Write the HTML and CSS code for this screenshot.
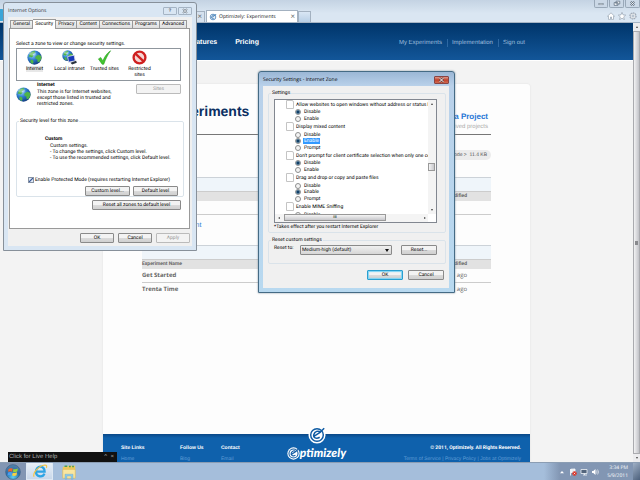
FILE: index.html
```html
<!DOCTYPE html>
<html lang="en">
<head>
<meta charset="utf-8">
<title>Optimizely: Experiments</title>
<link rel="stylesheet" href="styles.css">
</head>
<body>
<svg class="defs" aria-hidden="true">
  <defs>
    <radialGradient id="sea" cx=".35" cy=".3" r=".8"><stop offset="0" stop-color="#a8dcff"/><stop offset=".45" stop-color="#2f7fd0"/><stop offset="1" stop-color="#0d3070"/></radialGradient>
    <radialGradient id="orb" cx=".5" cy=".85" r=".9"><stop offset="0" stop-color="#5fd0f0"/><stop offset=".5" stop-color="#2a6ea8"/><stop offset="1" stop-color="#5f86a8"/></radialGradient>
    <symbol id="globe" viewBox="0 0 16 16">
      <circle cx="8" cy="8" r="7.600" fill="url(#sea)"/>
      <path d="M3 4c2-3 5-3 6-2.500l-1 2-2 1 1 1.500-2 2-2-1-1.500 1zM9 7l3-2 3 1 .4 3-2 3.500-2 .5-.5-3-2-1zM4 10l2.500 1 .5 2-1 2-2.500-2z" fill="#4fb548"/>
      <ellipse cx="6" cy="4" rx="3.500" ry="2" fill="#fff" opacity=".35"/>
    </symbol>
    <symbol id="mark" viewBox="0 0 20 20">
      <circle cx="10" cy="10" r="9.500" fill="#fff"/>
      <circle cx="10" cy="10" r="7" fill="none" stroke="#0f5ba3" stroke-width="1.600"/>
      <path d="M6.500 11.500L13.500 7C11.500 4.500 7.500 6 6.500 9.500S9 15 13 12.500M13.500 7L18 2.500" fill="none" stroke="#0f5ba3" stroke-width="1.700"/>
    </symbol>
  </defs>
</svg>

<div class="browser">
  <header class="chrome">
    <span class="back"></span>
    <div class="tabs">
      <div class="tab tab-old"><span>×</span></div>
      <div class="tab tab-on"><svg class="fav"><use href="#mark"/></svg><span class="tab-name">Optimizely: Experiments</span><span class="x">×</span></div>
      <div class="tab tab-new"></div>
    </div>
    <div class="chrome-right">
      <div class="winbtns">
        <button aria-label="Minimize"><svg viewBox="0 0 14 7"><rect x="4.500" y="3.500" width="5" height="1.500" fill="#fff" stroke="#5b6b7c" stroke-width=".6"/></svg></button>
        <button aria-label="Restore"><svg viewBox="0 0 14 7"><path d="M6.500 1h4v3h-4zM4.500 2.500h4v3h-4z" fill="#fff" stroke="#5b6b7c" stroke-width=".8"/></svg></button>
        <button aria-label="Close"><svg viewBox="0 0 14 7"><path d="M5 1.500l4 4M9 1.500l-4 4" stroke="#5b6b7c" stroke-width="1.800"/><path d="M5 1.500l4 4M9 1.500l-4 4" stroke="#fff" stroke-width=".8"/></svg></button>
      </div>
      <div class="tools">
        <svg viewBox="0 0 8 8"><path d="M.5 4.200L4 .8l3.500 3.400h-1V7.400h-2V5h-1v2.400h-2V4.200z" fill="#fff" stroke="#8a97a6" stroke-width=".6"/></svg>
        <svg viewBox="0 0 8 8"><path d="M4 .4l1.100 2.500 2.600.2-2 1.800.7 2.700L4 6.200 1.600 7.600l.7-2.700-2-1.800 2.600-.2z" fill="#fff" stroke="#8a97a6" stroke-width=".6"/></svg>
        <svg viewBox="0 0 8 8"><circle cx="4" cy="4" r="2.900" fill="#fff" stroke="#8a97a6" stroke-width="1.300" stroke-dasharray="1.500 .7"/><circle cx="4" cy="4" r="2.700" fill="#fff" stroke="#8a97a6" stroke-width=".5"/><circle cx="4" cy="4" r="1.200" fill="#dce7f2" stroke="#8a97a6" stroke-width=".6"/></svg>
      </div>
    </div>
  </header>

  <div class="view">
    <div class="page">
      <div class="banner">
        <nav class="nav-main"><a href="#">Features</a><a href="#">Pricing</a></nav>
        <nav class="nav-user"><a href="#">My Experiments</a><a href="#">Implementation</a><a href="#">Sign out</a></nav>
      </div>
      <main class="card">
        <div class="content">
          <div class="heading">
            <h1>My Experiments</h1>
            <div class="create"><a href="#">Create a Project</a><span>archived projects</span></div>
          </div>
          <div class="size"><span>Code &gt;&nbsp; 11.4 KB</span></div>
          <table class="list">
            <thead><tr class="bar"><td colspan="2"></td></tr><tr><th></th><th class="when">Modified</th></tr></thead>
            <tbody><tr><td></td><td class="when"></td></tr></tbody>
          </table>
          <a class="new" href="#">New Experiment</a>
          <table class="list">
            <thead><tr class="bar"><td colspan="2"></td></tr><tr><th>Experiment Name</th><th class="when">Modified</th></tr></thead>
            <tbody>
              <tr><td>Get Started</td><td class="when">ago</td></tr>
              <tr class="last"><td>Trenta Time</td><td class="when">ago</td></tr>
            </tbody>
          </table>
        </div>
        <footer class="foot">
          <div class="links">
            <div><b>Site Links</b><a href="#">Home</a></div>
            <div><b>Follow Us</b><a href="#">Blog</a></div>
            <div><b>Contact</b><a href="#">Email</a></div>
          </div>
          <div class="brand"><svg class="badge"><use href="#mark"/></svg><div class="word"><svg><use href="#mark"/></svg><span>ptimizely</span></div></div>
          <div class="legal"><b>© 2011, Optimizely. All Rights Reserved.</b><span>Terms of Service | Privacy Policy | Jobs at Optimizely</span></div>
        </footer>
      </main>
    </div>
    <div class="scroll"><span class="arrow up"></span><div class="thumb"><i></i></div><span class="arrow down"></span></div>
    <div class="help"><span>Click for Live Help</span><span class="help-x">^&nbsp; ×</span></div>
  </div>
</div>

<section class="dialog options">
  <div class="title"><span>Internet Options</span><div class="cap"><button>?</button><button aria-label="Close"><svg viewBox="0 0 8 6"><path d="M2 1l4 4M6 1L2 5" stroke="#66717c" stroke-width="1.600"/><path d="M2 1l4 4M6 1L2 5" stroke="#fff" stroke-width=".6"/></svg></button></div></div>
  <div class="inner">
    <div class="tabrow"><button>General</button><button class="on">Security</button><button>Privacy</button><button>Content</button><button>Connections</button><button>Programs</button><button>Advanced</button></div>
    <div class="panel">
      <p class="lead">Select a zone to view or change security settings.</p>
      <div class="zones">
        <div><svg viewBox="0 0 16 16"><use href="#globe"/></svg><span class="picked">Internet</span></div>
        <div><svg viewBox="0 0 16 16"><use href="#globe" width="12" height="12"/><path d="M6 7l7-1.500 1 6-7 1.500z" fill="#1838b8" stroke="#d8dce4" stroke-width=".9"/><path d="M9 13.500l6-2 .8 2-5 2z" fill="#28323e"/></svg><span>Local intranet</span></div>
        <div><svg viewBox="0 0 16 16"><path d="M1.500 9.500L4 8l2.300 3.600C8 7 10.500 3.500 14.500.8 11.500 5 9 10 7.200 15.200H5.500z" fill="#42c52f" stroke="#239a1c" stroke-width=".6"/></svg><span>Trusted sites</span></div>
        <div><svg viewBox="0 0 16 16"><circle cx="8" cy="8" r="6.300" fill="#f6d5d3" stroke="#cf2020" stroke-width="2.500"/><path d="M3.600 3.800l8.800 8.400" stroke="#cf2020" stroke-width="2.500"/></svg><span>Restricted<br>sites</span></div>
      </div>
      <div class="about">
        <svg viewBox="0 0 16 16"><use href="#globe"/></svg>
        <div><b>Internet</b><p>This zone is for Internet websites,<br>except those listed in trusted and<br>restricted zones.</p></div>
        <button class="btn" disabled>Sites</button>
      </div>
      <fieldset class="level">
        <legend>Security level for this zone</legend>
        <div class="custom"><b>Custom</b><p>Custom settings.<br>- To change the settings, click Custom level.<br>- To use the recommended settings, click Default level.</p></div>
        <label class="protect"><input type="checkbox" checked>Enable Protected Mode (requires restarting Internet Explorer)</label>
        <div class="row"><button class="btn">Custom level...</button><button class="btn">Default level</button></div>
      </fieldset>
      <button class="btn reset-all">Reset all zones to default level</button>
    </div>
    <div class="actions"><button class="btn">OK</button><button class="btn">Cancel</button><button class="btn" disabled>Apply</button></div>
  </div>
</section>

<section class="dialog security">
  <div class="title"><span>Security Settings - Internet Zone</span><button class="close" aria-label="Close"><svg viewBox="0 0 8 6"><path d="M2 1l4 4M6 1L2 5" stroke="#5c3030" stroke-width="1.800"/><path d="M2 1l4 4M6 1L2 5" stroke="#fff" stroke-width="1"/></svg></button></div>
  <div class="inner">
    <fieldset class="settings">
      <legend>Settings</legend>
      <div class="listbox">
        <div class="rows">
          <div class="head">Allow websites to open windows without address or status b</div>
          <label><input type="radio" name="a" checked><span>Disable</span></label>
          <label><input type="radio" name="a"><span>Enable</span></label>
          <div class="head">Display mixed content</div>
          <label><input type="radio" name="b"><span>Disable</span></label>
          <label class="hot"><input type="radio" name="b" checked><span>Enable</span></label>
          <label><input type="radio" name="b"><span>Prompt</span></label>
          <div class="head">Don't prompt for client certificate selection when only one ce</div>
          <label><input type="radio" name="c" checked><span>Disable</span></label>
          <label><input type="radio" name="c"><span>Enable</span></label>
          <div class="head">Drag and drop or copy and paste files</div>
          <label><input type="radio" name="d"><span>Disable</span></label>
          <label><input type="radio" name="d" checked><span>Enable</span></label>
          <label><input type="radio" name="d"><span>Prompt</span></label>
          <div class="head">Enable MIME Sniffing</div>
          <label><input type="radio" name="e"><span>Disable</span></label>
        </div>
        <div class="vbar"><span class="arrow up"></span><i></i><span class="arrow down"></span></div>
        <div class="hbar"><span class="arrow left"></span><i>ııı</i><span class="arrow right"></span></div>
      </div>
      <p class="note">*Takes effect after you restart Internet Explorer</p>
    </fieldset>
    <fieldset class="reset">
      <legend>Reset custom settings</legend>
      <div class="reset-row"><label for="to">Reset to:</label><div class="pick"><select id="to"><option>Medium-high (default)</option></select></div><button class="btn">Reset...</button></div>
    </fieldset>
    <div class="actions"><button class="btn primary">OK</button><button class="btn">Cancel</button></div>
  </div>
</section>

<div class="taskbar">
  <button class="start" aria-label="Start"><svg viewBox="0 0 18 18"><circle cx="9" cy="9" r="8.300" fill="url(#orb)" stroke="#35567c" stroke-width=".6"/><path d="M4 5.500Q6.500 4 8.700 5.200L8 8.600Q6 7.600 3.500 8.800z" fill="#f2642c"/><path d="M9.500 5.500Q12 6.500 14.500 5L13.800 8.400Q11.500 9.700 8.900 8.800z" fill="#9ad03c"/><path d="M3.300 9.600Q5.800 8.500 7.900 9.500L7.200 12.800Q5 11.800 2.800 13z" fill="#4a9cf0"/><path d="M8.700 9.800Q11.200 10.700 13.600 9.300L12.900 12.700Q10.500 14 8 13z" fill="#fbd040"/></svg></button>
  <button class="task" aria-label="Internet Explorer"><svg viewBox="0 0 18 18"><path d="M4.800 9.800h9.400C14.300 2 4.600 2.500 4.400 9.800 4.600 15.700 12 16.800 14 11.900" fill="none" stroke="#2da4e4" stroke-width="2.600"/><path d="M2.300 15.500C.5 12 7 3 14.500 2.200c2.500 0 2.300 2 1.500 3.300" fill="none" stroke="#f5c444" stroke-width="1.300"/></svg></button>
  <button class="folder" aria-label="Explorer"><svg viewBox="0 0 18 18"><path d="M2 3h5l1-1h8v12H2z" fill="#eec95c"/><path d="M4 2.500h3M9 2.800h2M12.500 2.800h2" stroke="#4c9f50" stroke-width="1.500"/><path d="M2 6h14v10H2z" fill="#f9e6a0" stroke="#dcb650" stroke-width=".6"/><path d="M4.500 17v-5.500h9V17h-2v-3.500h-5V17z" fill="#8fcbea" stroke="#5d9fc8" stroke-width=".4"/></svg></button>
  <div class="tray">
    <svg viewBox="0 0 8 8"><path d="M2 5.300h4L4 3z" fill="#fff"/></svg>
    <svg viewBox="0 0 8 8"><path d="M1.500 1v6.500M2 1.200l4-.2v3.600H2z" fill="#e8edf3" stroke="#fff" stroke-width=".8"/><circle cx="5.500" cy="5.500" r="2.200" fill="#d83428"/><path d="M4.700 4.700l1.600 1.600M6.300 4.700L4.700 6.300" stroke="#fff" stroke-width=".6"/></svg>
    <svg viewBox="0 0 8 8"><path d="M1 1.500h6v4H1zM3 7h4M4.500 5.500V7" fill="#53657c" stroke="#f0f4f8" stroke-width=".8"/></svg>
    <svg viewBox="0 0 8 8"><path d="M1 3h1.300L4.500 1v6L2.300 5H1z" fill="#fff"/><path d="M5.500 2.500q1 1.500 0 3M6.600 1.500q1.800 2.500 0 5" fill="none" stroke="#fff" stroke-width=".6"/></svg>
    <div class="clock">3:34 PM<br>5/9/2011</div>
  </div>
  <div class="peek"></div>
</div>
</body>
</html>
```

FILE: styles.css
```css
* { box-sizing: border-box; }
html, body { height: 100%; }
body {
  margin: 0;
  display: grid;
  grid-template-rows: 1fr 18px;
  position: relative;
  overflow: hidden;
  font-family: "Liberation Sans", sans-serif;
  text-rendering: geometricPrecision;
}
p, h1, fieldset { margin: 0; padding: 0; }
a { color: inherit; text-decoration: none; }
button, select { text-rendering: inherit; }
button { margin: 0; padding: 0; font: inherit; color: inherit; border: 0; background: none; }
svg { display: block; }
.defs { position: absolute; width: 0; height: 0; }

/* browser frame */
.browser { display: grid; grid-template-rows: 23px 1fr; min-height: 0; }
.chrome {
  display: flex;
  justify-content: space-between;
  background: linear-gradient(#c4d3e3, #dae6f2 60%);
  border-bottom: 1px solid #a6b5c5;
}
.back { width: 8px; height: 12px; margin-top: 9px; border-radius: 0 6px 6px 0; background: #3aa5d8; }
.tabs { flex: 1; display: flex; align-items: flex-end; padding-left: 178px; font: 5px/10px "Open Sans", sans-serif; color: #111; }
.tab { height: 11px; border: 1px solid #a3b1c0; border-bottom: 0; background: #d5e1ee; }
.tab-old { width: 19px; text-align: right; padding-right: 2px; font-size: 8px; margin-right: 1px; color: #666; }
.tab-on { width: 92px; height: 12px; display: flex; align-items: center; gap: 2px; padding: 0 2px; background: #fff; }
.tab-name { flex: 1; white-space: nowrap; }
.x { font-size: 8px; color: #666; }
.fav { width: 8px; height: 8px; }
.tab-new { width: 13px; background: linear-gradient(#d9e6f4, #b8cfe6); }
.chrome-right { display: flex; flex-direction: column; align-items: flex-end; gap: 4px; }
.winbtns { display: flex; gap: 1px; }
.winbtns button { width: 14px; height: 8px; border: 1px solid #99a8b8; border-top: 0; border-radius: 0 0 2px 2px; background: #cbd8e6; }
.winbtns button + button { width: 15px; }
.winbtns svg { width: 100%; height: 7px; }
.tools { display: flex; gap: 3px; padding-right: 3px; }
.tools svg { width: 8px; height: 8px; }

/* web page */
.view { position: relative; display: grid; grid-template-columns: 1fr 7px; min-height: 0; overflow: hidden; }
.page { display: flex; flex-direction: column; align-items: center; background: #f3f3f3; min-height: 0; }
.banner {
  width: 100%;
  height: 38px;
  flex: none;
  display: flex;
  justify-content: space-between;
  align-items: center;
  padding: 2px 108px 0 188px;
  background: linear-gradient(#00356a, #125699);
  border-bottom: 1px solid #fff;
}
.nav-main { display: flex; gap: 18px; color: #fff; font-weight: bold; font-size: 7px; }
.nav-user { display: flex; color: #9dbede; font-size: 6px; line-height: 8px; }
.nav-user a + a { margin-left: 5px; padding-left: 4px; border-left: 1px solid #2d68a3; }
.card {
  flex: 1;
  width: 427px;
  max-width: 100%;
  margin-top: 23px;
  display: flex;
  flex-direction: column;
  justify-content: space-between;
  background: #fdfdfd;
  border-radius: 3px 3px 0 0;
  box-shadow: 0 0 2px #ddd;
}
.content { padding: 18px 39px 0; }
.heading { display: flex; justify-content: space-between; height: 33px; border-bottom: 1px solid #777; }
h1 { font-size: 14px; line-height: 18px; color: #0b2f62; }
.create { display: flex; flex-direction: column; text-align: right; padding: 10px 3px 0 0; font-size: 6px; line-height: 10px; color: #aaa; }
.create a { font-size: 8px; line-height: 10px; font-weight: bold; color: #1f76d6; }
.size { display: flex; justify-content: flex-end; margin: 15px 0 17px; }
.size span { font-size: 5px; line-height: 10px; padding: 0 4px; border-radius: 5px; background: #ececec; color: #555; }
.list { width: 100%; border-collapse: collapse; font: bold 6px/13px "Open Sans", sans-serif; color: #666; }
.list td, .list th { padding: 0; text-align: left; }
.list .bar td { height: 14px; background: #eff5fa; border-top: 1px solid #ccd2d8; }
.list th { height: 9px; font: bold 5px/8px "Roboto", sans-serif; background: #e2e2e2; border-top: 1px solid #ccc; }
.list tbody td { height: 14px; border-bottom: 1px solid #ccc; }
.list tbody .last td { border: 0; }
.list .when { width: 90px; padding-right: 24px; text-align: right; }
.list td.when { font-weight: normal; font-size: 6px; }
.new { display: block; height: 30px; padding: 4px 0 0 8px; font-size: 7px; line-height: 13px; color: #2f7fd6; }

.foot {
  display: grid;
  grid-template-columns: 1fr 64px 1fr;
  height: 28px;
  padding: 9px 9px 0;
  background: linear-gradient(#0a4887, #0f61ac 4px);
  color: #fff;
  font-size: 5px;
  line-height: 10px;
}
.links { display: flex; padding-left: 9px; }
.links div { display: flex; flex-direction: column; width: 41px; gap: 1px; }
.links div:first-child { width: 59px; }
.links a, .legal span { color: #5f9dd6; }
.brand { display: flex; flex-direction: column; align-items: center; position: relative; }
.badge { position: absolute; top: -17px; width: 18px; height: 18px; }
.word { display: flex; align-items: center; margin-top: 3px; font: italic 900 12px/14px Lato, sans-serif; }
.word svg { width: 13px; height: 13px; }
.legal { display: flex; flex-direction: column; align-items: flex-end; white-space: nowrap; line-height: 11px; }
.legal b { font-family: Roboto, sans-serif; }

.scroll { display: flex; flex-direction: column; background: #ececee; }
.thumb { flex: 1; display: flex; align-items: center; justify-content: center; border: 1px solid #aaabaf; background: linear-gradient(90deg, #f2f2f3, #c2c3c8); }
.thumb i { width: 3px; height: 4px; background: #88898d; }
.arrow { flex: none; display: grid; place-items: center; width: 7px; height: 8px; }
.arrow::before { content: ""; border: 1px solid transparent; }
.up::before { border-bottom: 2px solid #444; border-top: 0; }
.down::before { border-top: 2px solid #444; border-bottom: 0; }
.left::before { border-right: 2px solid #444; border-left: 0; }
.right::before { border-left: 2px solid #444; border-right: 0; }
.help {
  position: absolute;
  left: 8px;
  bottom: 0;
  width: 109px;
  display: flex;
  justify-content: space-between;
  padding: 0 3px 0 1px;
  background: #111;
  color: #b0b0b0;
  font-size: 6px;
  line-height: 10px;
}

/* dialogs */
.dialog { position: absolute; display: flex; flex-direction: column; font: 5px/6px Roboto, sans-serif; color: #000; border-radius: 3px 3px 0 0; }
.dialog .title { display: flex; justify-content: space-between; align-items: center; }
.dialog .title > span { font: 5px/10px "Open Sans", sans-serif; }
.dialog .inner { flex: 1; background: #f0f0f0; }
.options { left: 3px; top: 2px; width: 194px; border: 1px solid #87909a; background: #d9e6f3; padding: 0 4px 4px; }
.options .title { height: 14px; padding-top: 2px; }
.options .title > span { color: #333; }
.cap { display: flex; gap: 1px; color: #667; }
.cap button { width: 14px; height: 8px; border: 1px solid #a5b4c4; border-radius: 1px; font-weight: bold; }
.cap svg, .close svg { width: 100%; height: 6px; }
.options .inner { padding: 2px 2px 3px 1px; }
.tabrow { display: flex; align-items: flex-end; height: 9px; padding: 0 3px 0 1px; }
.tabrow button { flex: auto; height: 8px; line-height: 7px; border: 1px solid #999; border-bottom: 0; border-left-width: 0; background: linear-gradient(#f4f4f4, #ddd); }
.tabrow button:first-child { border-left-width: 1px; }
.tabrow .on { height: 10px; margin-bottom: -1px; background: #fff; z-index: 1; }
.panel { height: 201px; border: 1px solid #999; background: #fff; padding: 12px 4px 0 6px; }
.lead { height: 7px; }
.zones { display: flex; width: 165px; height: 33px; margin-bottom: 1px; padding: 1px 0 0; border: 1px solid #8f969d; }
.zones div { width: 35px; display: flex; flex-direction: column; align-items: center; gap: 1px; text-align: center; white-space: nowrap; }
.zones svg { width: 15px; height: 15px; }
.zones .picked { background: #e8e8e8; }
.about { display: flex; width: 165px; gap: 6px; height: 36px; }
.about svg { width: 15px; height: 15px; margin-top: 5px; }
.about > div { flex: 1; white-space: nowrap; }
.about b { display: block; line-height: 7px; }
.btn { height: 10px; border: 1px solid #8a8a8a; border-radius: 1px; background: linear-gradient(#f3f3f3 45%, #dadada 55%, #d0d0d0); text-align: center; line-height: 8px; white-space: nowrap; }
.btn:disabled { color: #999; border-color: #bbb; background: #f3f3f3; }
.about .btn { width: 45px; margin-top: 2px; }
fieldset { min-width: 0; border: 1px solid #dae3ea; border-radius: 2px; }
legend { padding: 0 1px; margin-left: 2px; line-height: 6px; }
.level { width: 168px; height: 79px; }
.custom { height: 53px; padding: 12px 0 0 28px; white-space: nowrap; }
.custom b { display: block; line-height: 7px; }
.custom p { padding-left: 5px; }
.protect { display: flex; align-items: center; gap: 1px; padding-left: 11px; height: 6px; white-space: nowrap; }
.protect input { appearance: none; margin: 0; width: 6px; height: 6px; border: 1px solid #8793a3; background: linear-gradient(135deg, #dfe8f5 30%, #3c5a9a 50%, #dfe8f5 70%); }
.level .row { display: flex; justify-content: flex-end; gap: 3px; padding: 3px 5px 0 0; }
.level .btn { width: 45px; }
.reset-all { display: block; width: 89px; margin: 3px 0 0 76px; }
.actions { display: flex; justify-content: flex-end; gap: 4px; }
.options .actions { padding-top: 4px; }
.options .actions .btn { width: 34px; height: 10px; }

.security { left: 258px; top: 71px; width: 197px; border: 1px solid #456b85; background: linear-gradient(#9bb7d6, #b9d1ea 14px, #b8d9f0); padding: 0 5px 4px 4px; box-shadow: 0 0 2px #789; }
.security .title { height: 14px; padding-top: 1px; }
.close { width: 15px; height: 8px; border: 1px solid #844; border-radius: 1px; background: linear-gradient(#e09a8c, #c0412c 50%, #d06a50); }
.security .inner { padding: 4px 3px 8px 5px; }
.security fieldset { padding: 0 8px 0 5px; }
.security legend { margin-left: -3px; }
.settings { height: 143px; }
.listbox { display: grid; grid-template-columns: 1fr 8px; grid-template-rows: 114px 8px; height: 124px; margin-top: 3px; border: 1px solid #828790; background: #fff; }
.rows { display: grid; grid-auto-rows: 1fr; height: 118px; overflow: hidden; white-space: nowrap; padding-left: 11px; clip-path: inset(0 0 4px 0); }
.rows > * { display: flex; align-items: center; min-width: 0; }
.rows .head::before { content: ""; width: 6px; height: 7px; margin-right: 2px; flex: none; border: 1px solid #c4c4c4; border-radius: 0 2px 0 0; background: #fff; }
.rows label { gap: 2px; padding-left: 9px; }
.rows input { appearance: none; flex: none; margin: 0; width: 6px; height: 6px; border: 1px solid #8e8f8f; border-radius: 50%; background: #f4f4f4; }
.rows input:checked { background: radial-gradient(#123f66 30%, #9cc6e0 90%); }
.rows label span { padding: 0 1px; }
.hot span { background: #3399ff; color: #fff; }
.vbar { display: flex; flex-direction: column; background: #f4f4f4; min-height: 0; }
.vbar i { width: 7px; height: 8px; margin-top: 55px; border: 1px solid #999; background: linear-gradient(90deg, #f4f4f4, #c8c8cc); }
.vbar .down { margin-top: auto; }
.hbar { grid-column: 1; display: flex; background: #f4f4f4; }
.hbar i { width: 102px; height: 7px; margin: 0 auto 0 2px; border: 1px solid #999; background: linear-gradient(#f4f4f4, #c8c8cc); font-style: normal; text-align: center; line-height: 5px; }
.note { line-height: 8px; }
.reset { height: 27px; margin-top: 4px; }
.reset-row { display: flex; padding-top: 2px; }
.reset-row label { width: 26px; }
.pick { position: relative; flex: 1; }
.pick::after { content: ""; position: absolute; right: 3px; top: 4px; border: 2px solid transparent; border-top: 3px solid #111; border-bottom: 0; }
.pick select { appearance: none; width: 100%; height: 10px; margin: 0; padding: 0 1px; border: 1px solid #8a8a8a; border-radius: 1px; background: linear-gradient(#f0f0f0, #d6d6d6); font: inherit; color: #111; }
.reset-row .btn { width: 36px; margin-left: 9px; }
.security .actions { padding: 6px 2px 0 0; gap: 5px; }
.security .actions .btn { width: 36px; }
.btn.primary { border-color: #2a9fd0; box-shadow: inset 0 0 1px 1px #7fd4f4; }

/* taskbar */
.taskbar { display: flex; background: #a5bedb; border-top: 1px solid #8b9db3; }
.taskbar button svg { width: 16px; height: 16px; margin: 0 auto; }
.start { width: 26px; background: #8296b3; }
.task { width: 27px; background: linear-gradient(#e8f0f8, #c9d8ea); border: 1px solid #dde8f3; border-top: 0; }
.folder { width: 31px; }
.tray { margin-left: auto; display: flex; align-items: center; gap: 3px; padding: 0 5px 0 14px; background: linear-gradient(90deg, #a5bedb, #8296b3 16px); color: #fff; }
.tray svg { width: 8px; height: 8px; }
.clock { width: 26px; text-align: right; font: 5px/8px "Open Sans", sans-serif; }
.peek { width: 7px; background: linear-gradient(135deg, #9fb0c6, #4c607c); }
```
